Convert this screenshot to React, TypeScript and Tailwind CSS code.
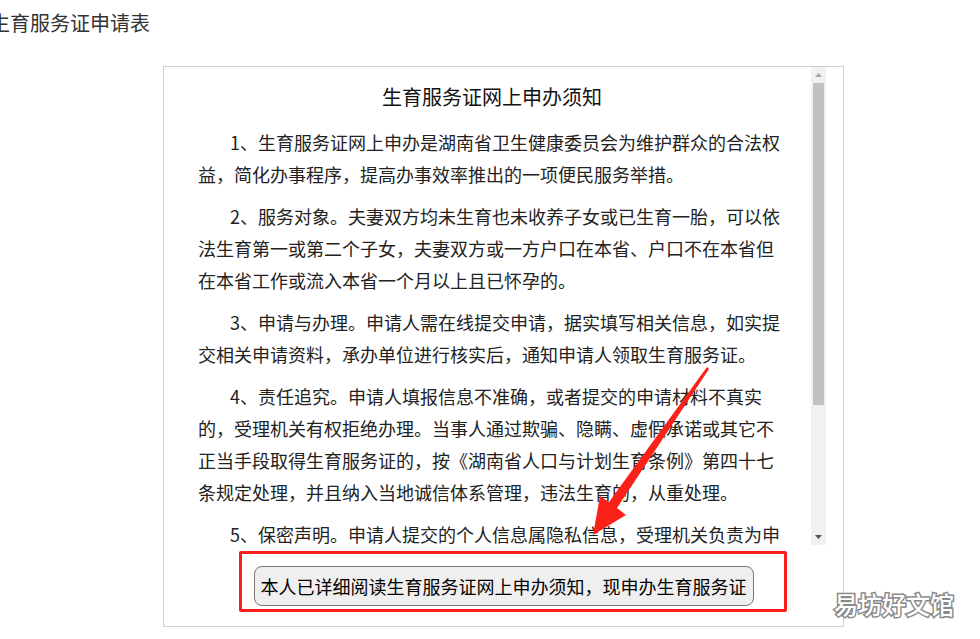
import React from 'react';

const paragraphs: React.ReactNode[] = [
  '1、生育服务证网上申办是湖南省卫生健康委员会为维护群众的合法权益，简化办事程序，提高办事效率推出的一项便民服务举措。',
  '2、服务对象。夫妻双方均未生育也未收养子女或已生育一胎，可以依法生育第一或第二个子女，夫妻双方或一方户口在本省、户口不在本省但在本省工作或流入本省一个月以上且已怀孕的。',
  '3、申请与办理。申请人需在线提交申请，据实填写相关信息，如实提交相关申请资料，承办单位进行核实后，通知申请人领取生育服务证。',
  <>
    4、责任追究。申请人填报信息不准确，或者提交的申请材料不真实的，受理机关有权拒绝办理。当事人通过欺骗、隐瞒、虚假承诺或其它不正当手段取得生育服务证的，按《湖南省人口与计划生育条例》第四十七
    <br />
    条规定处理，并且纳入当地诚信体系管理，违法生育的，从重处理。
  </>,
  '5、保密声明。申请人提交的个人信息属隐私信息，受理机关负责为申请人保密，不得泄露给任何第三方。',
];

function Scrollbar() {
  return (
    <div className="flex h-full w-[15px] shrink-0 flex-col bg-[#f1f1f1]">
      <div className="flex h-[16px] items-center justify-center">
        <svg width="7" height="4" viewBox="0 0 7 4">
          <path d="M3.5 0L7 4H0z" fill="#a3a3a3" />
        </svg>
      </div>
      <div className="mx-[2px] h-[322px] bg-[#c1c1c1]" />
      <div className="flex-1" />
      <div className="flex h-[16px] items-center justify-center">
        <svg width="7" height="4" viewBox="0 0 7 4">
          <path d="M0 0H7L3.5 4z" fill="#505050" />
        </svg>
      </div>
    </div>
  );
}

export default function App() {
  return (
    <div className="relative h-[639px] w-[980px] overflow-hidden bg-white font-['Noto_Sans_CJK_SC','Noto_Sans',sans-serif] text-[#222]">
      <h1 className="-ml-[10px] pt-[9px] text-[20px] leading-[28px] font-normal text-[#333]">生育服务证申请表</h1>

      <div className="ml-[163px] mt-[29px] flex h-[561px] w-[681px] flex-col border border-[#cfcfcf]">
        <div className="flex h-[478px] w-[662px]">
          <div className="flex-1 overflow-hidden pl-[34px] pr-[25px] pt-[14px]">
            <h2 className="mb-[13px] text-center text-[20px] leading-[32px] font-normal text-[#111]">生育服务证网上申办须知</h2>
            {paragraphs.map((p, i) => (
              <p key={i} className="mb-[10px] indent-[32px] text-[18px] leading-[32px]">
                {p}
              </p>
            ))}
          </div>
          <Scrollbar />
        </div>

        <div className="flex justify-center pt-[21px]">
          <button className="h-[40px] rounded-[8px] border border-[#767676] bg-[#efefef] px-[6px] text-[18px] leading-none text-black">
            本人已详细阅读生育服务证网上申办须知，现申办生育服务证
          </button>
        </div>
      </div>

      {/* annotation overlays */}
      <div className="absolute left-[239px] top-[551px] h-[61px] w-[548px] rounded-[2px] border-[3px] border-[#fa1e1e]" />

      <svg className="pointer-events-none absolute left-0 top-0" width="980" height="639" viewBox="0 0 980 639">
        <polygon
          points="709,369 617,508 626,515 593,535 600,496 609,502 707,367"
          fill="#fa2218"
        />
      </svg>

      <div className="absolute left-[834px] top-[589px] text-[24px] leading-[30px] font-medium text-white [-webkit-text-stroke:3px_#8a8a8a] [paint-order:stroke_fill]">
        易坊好文馆
      </div>
    </div>
  );
}
